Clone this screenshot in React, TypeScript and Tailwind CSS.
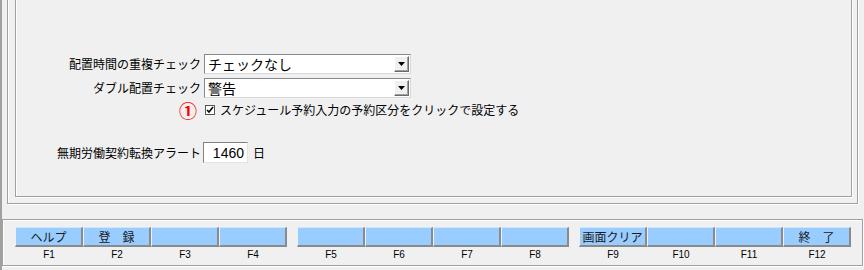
import React from 'react';

const fKeys: { key: string; label: string }[][] = [
  [
    { key: 'F1', label: 'ヘルプ' },
    { key: 'F2', label: '登　録' },
    { key: 'F3', label: '' },
    { key: 'F4', label: '' },
  ],
  [
    { key: 'F5', label: '' },
    { key: 'F6', label: '' },
    { key: 'F7', label: '' },
    { key: 'F8', label: '' },
  ],
  [
    { key: 'F9', label: '画面クリア' },
    { key: 'F10', label: '' },
    { key: 'F11', label: '' },
    { key: 'F12', label: '終　了' },
  ],
];

const Select: React.FC<{ value: string }> = ({ value }) => (
  <div className="w-[207px] h-[20px] bg-white border border-t-[#828790] border-l-[#828790] border-r-[#d8d8d8] border-b-[#d8d8d8] flex items-center">
    <span className="flex-1 pl-[3px] text-[14px] leading-none">{value}</span>
    <div className="w-[15px] h-[16px] mr-[1px] bg-[#f0f0f0] border border-t-white border-l-white border-r-[#696969] border-b-[#696969] shadow-[inset_-1px_-1px_0_#a0a0a0] flex items-center justify-center">
      <svg width="7" height="4" viewBox="0 0 7 4">
        <path d="M0 0h7L3.5 4z" fill="#000" />
      </svg>
    </div>
  </div>
);

const App: React.FC = () => {
  return (
    <div className="w-[864px] h-[270px] bg-[#f0f0f0] border-l-2 border-[#a0a0a0] overflow-hidden font-['Noto_Sans_CJK_JP',sans-serif] text-[12px] text-black flex flex-col">
      <div className="h-[219px] shrink-0 pl-[5px]">
        <div className="w-[851px] h-[204px] border-x border-b border-[#a0a0a0] shadow-[1px_1px_0_#fff,inset_1px_0_0_#fff] pl-[7px]">
          <div className="w-[837px] h-[197px] border-x border-b border-[#a0a0a0] shadow-[1px_1px_0_#fff,inset_1px_0_0_#fff] pt-[54px] flex flex-col">
            <div className="flex items-center">
              <div className="w-[185px] text-right leading-none">配置時間の重複チェック</div>
              <div className="ml-[3px]">
                <Select value="チェックなし" />
              </div>
            </div>
            <div className="flex items-center mt-[4px]">
              <div className="w-[185px] text-right leading-none">ダブル配置チェック</div>
              <div className="ml-[3px]">
                <Select value="警告" />
              </div>
            </div>
            <div className="flex items-center mt-[3px] h-[18px]">
              <div className="w-[185px] flex justify-end pr-[4px]">
                <span className="text-[18px] font-bold leading-none text-[#ff0000]">①</span>
              </div>
              <div className="ml-[4px] w-[10px] h-[10px] bg-white border border-[#555] flex items-center justify-center">
                <svg width="8" height="8" viewBox="0 0 8 8">
                  <path d="M1 4l2 2 4-5" fill="none" stroke="#000" strokeWidth="1.6" />
                </svg>
              </div>
              <span className="ml-[5px] leading-none">スケジュール予約入力の予約区分をクリックで設定する</span>
            </div>
            <div className="flex items-center mt-[23px]">
              <div className="w-[185px] text-right leading-none">無期労働契約転換アラート</div>
              <div className="ml-[2px] w-[45px] h-[21px] bg-white border border-t-[#808080] border-l-[#808080] border-r-[#e3e3e3] border-b-[#e3e3e3] flex items-center justify-end pr-[3px] font-['Liberation_Sans',sans-serif] text-[14px] leading-none">
                1460
              </div>
              <span className="ml-[5px] leading-none">日</span>
            </div>
          </div>
        </div>
      </div>

      <div className="w-[861px] h-[47px] shrink-0 border border-[#a0a0a0] shadow-[1px_1px_0_#fff,inset_1px_1px_0_#fff] pt-[7px] pl-[12px]">
        <div className="flex gap-[10px]">
          {fKeys.map((group, gi) => (
            <div key={gi} className="flex flex-col">
              <div className="flex">
                {group.map((b) => (
                  <div
                    key={b.key}
                    className="w-[68px] h-[20px] bg-[#99ccff] border-t border-l border-t-[#cfe6ff] border-l-[#e8f3ff] border-r-2 border-b-2 border-r-[#8a8a8a] border-b-[#8a8a8a] flex items-center justify-center text-[12px] leading-none text-[#1a1a1a]"
                  >
                    {b.label}
                  </div>
                ))}
              </div>
              <div className="flex h-[14px] mt-[1px]">
                {group.map((b) => (
                  <div
                    key={b.key}
                    className="w-[68px] flex items-center justify-center font-['Liberation_Sans',sans-serif] text-[10px] leading-none"
                  >
                    {b.key}
                  </div>
                ))}
              </div>
            </div>
          ))}
        </div>
      </div>
    </div>
  );
};

export default App;
